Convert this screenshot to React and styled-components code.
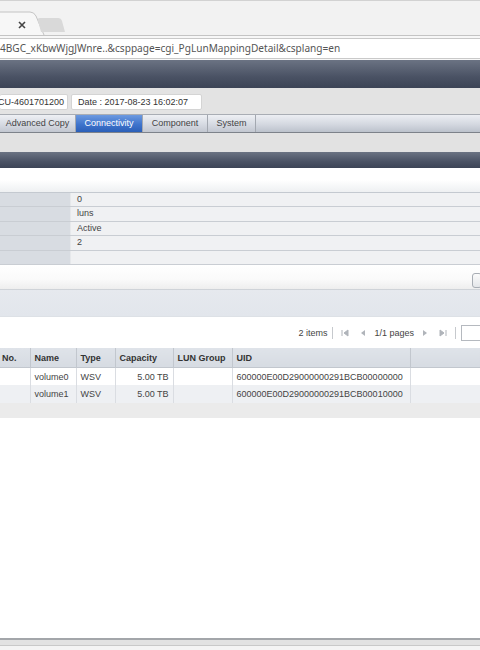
import React from 'react'
import styled, { createGlobalStyle } from 'styled-components';

const Global = createGlobalStyle`
  html, body { margin: 0; padding: 0; background: #fff; }
  body { font-family: "Liberation Sans", Arial, sans-serif; font-size: 9px; color: #333; }
  * { box-sizing: border-box; }
`;

const props = ['0', 'luns', 'Active', '2', ''];

const volumes = [
  { name: 'volume0', type: 'WSV', cap: '5.00 TB', uid: '600000E00D29000000291BCB00000000' },
  { name: 'volume1', type: 'WSV', cap: '5.00 TB', uid: '600000E00D29000000291BCB00010000' },
];

const cols = [30, 46, 39, 58, 59, 178];

const App = () => {
  return (
    <Page>
      <Global />
      <TabStrip>
        <svg width="70" height="36" viewBox="0 0 70 36">
          <path d="M-2 35 L-2 12 L30 12 Q34 12 36 16 L44 35" fill="#f7f7f7" stroke="#c4c4c4" />
          <path d="M41 32 L38 21 Q37 18 40 18 L58 18 Q61 18 62 21 L65 32 Z" fill="#d9d9d9" />
          <path d="M19 22 L25 28 M25 22 L19 28" stroke="#444" strokeWidth="1.6" />
        </svg>
      </TabStrip>
      <AddressArea>
        <AddressBox>4BGC_xKbwWjgJWnre..&amp;csppage=cgi_PgLunMappingDetail&amp;csplang=en</AddressBox>
      </AddressArea>
      <DarkBar height="28px" />
      <InfoRow>
        <InfoBox width="68px" indent="-2px">CU-4601701200</InfoBox>
        <InfoBox width="131px">Date : 2017-08-23 16:02:07</InfoBox>
      </InfoRow>
      <MenuBar>
        <MenuTab width="76px">Advanced Copy</MenuTab>
        <MenuTab width="67px" active>Connectivity</MenuTab>
        <MenuTab width="65px">Component</MenuTab>
        <MenuTab width="48px">System</MenuTab>
        <MenuFill />
      </MenuBar>
      <GrayGap />
      <DarkBar height="16px" />
      <WhiteFade />
      <PropTable>
        {props.map((v, i) => (
          <PropRow key={i}>
            <PropLabel />
            <PropValue>{v}</PropValue>
          </PropRow>
        ))}
      </PropTable>
      <ButtonRow>
        <SmallButton />
      </ButtonRow>
      <BlueBand />
      <Pager>
        <span>2 items</span>
        <Sep />
        <PagerIcon>
          <svg width="8" height="8" viewBox="0 0 8 8"><path d="M1 1 V7 M7 1 L3 4 L7 7 Z" stroke="#b0b4ba" fill="#b0b4ba" /></svg>
        </PagerIcon>
        <PagerIcon>
          <svg width="6" height="8" viewBox="0 0 6 8"><path d="M5 1 L1 4 L5 7 Z" fill="#b0b4ba" /></svg>
        </PagerIcon>
        <span>1/1 pages</span>
        <PagerIcon>
          <svg width="6" height="8" viewBox="0 0 6 8"><path d="M1 1 L5 4 L1 7 Z" fill="#b0b4ba" /></svg>
        </PagerIcon>
        <PagerIcon>
          <svg width="8" height="8" viewBox="0 0 8 8"><path d="M7 1 V7 M1 1 L5 4 L1 7 Z" stroke="#b0b4ba" fill="#b0b4ba" /></svg>
        </PagerIcon>
        <Sep />
        <PageInput />
      </Pager>
      <Grid>
        <thead>
          <tr>
            <Th style={{ width: cols[0] }}>No.</Th>
            <Th style={{ width: cols[1] }}>Name</Th>
            <Th style={{ width: cols[2] }}>Type</Th>
            <Th style={{ width: cols[3] }}>Capacity</Th>
            <Th style={{ width: cols[4] }}>LUN Group</Th>
            <Th style={{ width: cols[5] }}>UID</Th>
            <Th />
          </tr>
        </thead>
        <tbody>
          {volumes.map((v, i) => (
            <Tr key={v.name} odd={i % 2 === 1}>
              <Td />
              <Td>{v.name}</Td>
              <Td>{v.type}</Td>
              <Td right>{v.cap}</Td>
              <Td />
              <Td>{v.uid}</Td>
              <Td />
            </Tr>
          ))}
        </tbody>
      </Grid>
      <GridFoot />
      <Spacer />
      <StatusBar />
    </Page>
  )
}

export default App

const Page = styled.div`
  width: 480px;
  height: 650px;
  overflow: hidden;
  display: flex;
  flex-direction: column;
`;

const TabStrip = styled.div`
  height: 36px;
  flex-shrink: 0;
  background: #f2f2f2;
  border-top: 1px solid #d2d2d2;
  border-bottom: 1px solid #c4c4c4;
  display: flex;
  align-items: flex-end;
  svg { display: block; margin-bottom: -1px; }
`;

const AddressArea = styled.div`
  height: 24px;
  flex-shrink: 0;
  background: #f7f7f7;
  padding: 2px 0 1px 0;
`;

const AddressBox = styled.div`
  height: 21px;
  background: #fff;
  border-top: 1px solid #c9c9c9;
  border-bottom: 1px solid #c9c9c9;
  font-family: "Noto Sans", "Open Sans", sans-serif;
  font-size: 10.1px;
  color: #555;
  line-height: 19px;
  white-space: nowrap;
  overflow: hidden;
`;

const DarkBar = styled.div`
  height: ${p => p.height};
  flex-shrink: 0;
  background: linear-gradient(#6b7383, #4a5264 60%, #3c4456);
`;

const InfoRow = styled.div`
  height: 26px;
  flex-shrink: 0;
  background: #e3e3e3;
  display: flex;
  align-items: center;
  gap: 3px;
  padding-top: 2px;
`;

const InfoBox = styled.div`
  width: ${p => p.width};
  height: 16px;
  background: #fff;
  border: 1px solid #d4d4d4;
  border-radius: 2px;
  line-height: 14px;
  padding-left: 6px;
  text-indent: ${p => p.indent || '0'};
  white-space: nowrap;
  overflow: hidden;
  color: #333;
  &:first-child { border-left: none; padding-left: 0; }
`;

const MenuBar = styled.div`
  height: 19px;
  flex-shrink: 0;
  display: flex;
  border-top: 1px solid #a9adb4;
  border-bottom: 1px solid #7d828a;
  background: #e3e3e3;
`;

const MenuTab = styled.div`
  width: ${p => p.width};
  flex-shrink: 0;
  text-align: center;
  line-height: 17px;
  white-space: nowrap;
  color: ${p => (p.active ? '#fff' : '#444')};
  background: ${p => (p.active
    ? 'linear-gradient(#6d9ae0, #3f74cc 55%, #2b5fb8)'
    : 'linear-gradient(#eef0f4, #d6dae2 55%, #c2c7d0)')};
  border-right: 1px solid #a3a8b0;
`;

const MenuFill = styled.div`
  flex: 1;
  background: linear-gradient(#eceef3, #d4d8e0 55%, #bcc2cc);
`;

const GrayGap = styled.div`
  height: 19px;
  flex-shrink: 0;
  background: #e2e2e2;
`;

const WhiteFade = styled.div`
  height: 25px;
  flex-shrink: 0;
  background: linear-gradient(#fff, #fff 50%, #eef0f2);
  border-bottom: 1px solid #c4c9d0;
`;

const PropTable = styled.div`
  display: flex;
  flex-direction: column;
  flex-shrink: 0;
`;

const PropRow = styled.div`
  height: 14.4px;
  display: flex;
  border-bottom: 1px solid #c9cdd3;
`;

const PropLabel = styled.div`
  width: 71px;
  background: #d8dce2;
  border-right: 1px solid #e6e8eb;
`;

const PropValue = styled.div`
  flex: 1;
  background: #f0f1f3;
  padding-left: 6px;
  line-height: 13px;
  color: #444;
`;

const ButtonRow = styled.div`
  height: 25px;
  flex-shrink: 0;
  background: linear-gradient(#fff, #fafafa 60%, #eeeeee);
  display: flex;
  justify-content: flex-end;
  align-items: flex-end;
  padding-bottom: 1px;
  border-bottom: 1px solid #cfd3d8;
`;

const SmallButton = styled.div`
  width: 10px;
  height: 15px;
  margin-right: -2px;
  border: 1px solid #a8adb4;
  border-radius: 3px;
  background: linear-gradient(#fbfbfb, #e4e6e9);
`;

const BlueBand = styled.div`
  height: 27px;
  flex-shrink: 0;
  background: linear-gradient(#e6e9ee, #e2e6ec);
  border-bottom: 1px solid #dde1e6;
`;

const Pager = styled.div`
  height: 30px;
  flex-shrink: 0;
  display: flex;
  align-items: center;
  justify-content: flex-end;
  gap: 5px;
  color: #444;
  margin-right: -8px;
  padding-top: 3px;
`;

const Sep = styled.div`
  width: 1px;
  height: 12px;
  background: #c6c9cd;
`;

const PagerIcon = styled.span`
  display: inline-flex;
  padding: 0 3px;
  svg { display: block; }
`;

const PageInput = styled.div`
  width: 27px;
  height: 16px;
  border: 1px solid #b5b9bf;
  background: #fff;
`;

const Grid = styled.table`
  width: 100%;
  flex-shrink: 0;
  border-collapse: collapse;
  table-layout: fixed;
  margin-top: 1px;
`;

const Th = styled.th`
  height: 20px;
  background: linear-gradient(#dfe3e9, #d6dbe2);
  text-align: left;
  font-weight: bold;
  color: #333;
  white-space: nowrap;
  padding: 0 0 0 4px;
  border-right: 1px solid #c2c7ce;
  border-bottom: 1px solid #c2c7ce;
  &:first-child { padding-left: 2px; }
  &:last-child { border-right: none; }
`;

const Tr = styled.tr`
  background: ${p => (p.odd ? '#eef0f3' : '#fff')};
`;

const Td = styled.td`
  height: 17.5px;
  padding: 0 4px;
  color: #444;
  white-space: nowrap;
  overflow: hidden;
  text-align: ${p => (p.right ? 'right' : 'left')};
  border-right: 1px solid #dadde2;
  &:last-child { border-right: none; }
`;

const GridFoot = styled.div`
  height: 15px;
  flex-shrink: 0;
  background: #ebebeb;
`;

const Spacer = styled.div`
  flex: 1;
  background: #fff;
`;

const StatusBar = styled.div`
  height: 12px;
  flex-shrink: 0;
  border-top: 2px solid #a3a6aa;
  background: linear-gradient(#e2e2e2 0, #e2e2e2 5px, #c9c9c9 5px, #c9c9c9 6px, #f4f4f4 6px);
`;
